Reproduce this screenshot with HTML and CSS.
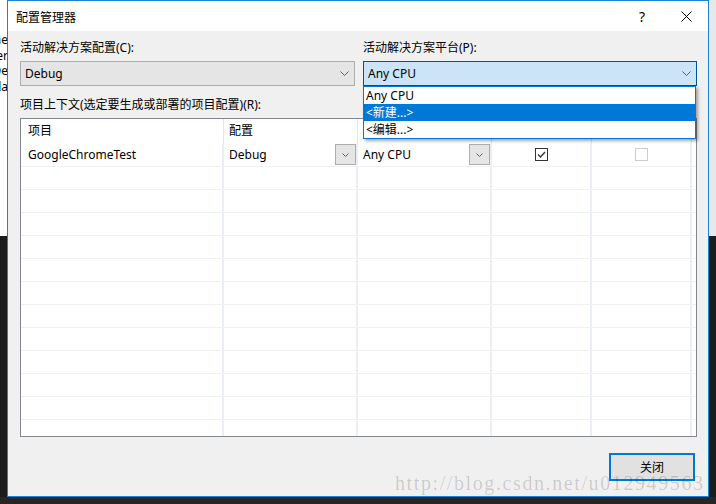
FILE: index.html
```html
<!DOCTYPE html>
<html>
<head>
<meta charset="utf-8">
<link rel="stylesheet" href="styles.css">
</head>
<body>
<div class="screen">
  <div class="main">
    <div class="side side-left">
      <div class="bgtext">
        <div class="bgline">ne</div>
        <div class="bgline">er</div>
        <div class="bgline">De</div>
        <div class="bgline">la</div>
      </div>
    </div>
    <div class="window">
      <div class="titlebar">
        <span class="title">配置管理器</span>
        <span class="tb-btn help">?</span>
        <span class="tb-btn close">
          <svg width="11" height="11" viewBox="0 0 11 11"><path d="M0.5 0.5 L10.5 10.5 M10.5 0.5 L0.5 10.5" stroke="#000" stroke-width="1" fill="none"/></svg>
        </span>
      </div>
      <div class="content">
        <div class="top-grid">
          <div class="field">
            <div class="label">活动解决方案配置(C):</div>
            <div class="combo">
              <span>Debug</span>
              <svg width="9" height="5" viewBox="0 0 9 5"><path d="M0.5 0.5 L4.5 4.5 L8.5 0.5" stroke="#606060" fill="none"/></svg>
            </div>
          </div>
          <div class="field">
            <div class="label">活动解决方案平台(P):</div>
            <div class="combo combo-open">
              <span>Any CPU</span>
              <svg width="9" height="5" viewBox="0 0 9 5"><path d="M0.5 0.5 L4.5 4.5 L8.5 0.5" stroke="#606060" fill="none"/></svg>
            </div>
            <div class="dropdown">
              <div class="dd-item">Any CPU</div>
              <div class="dd-item sel">&lt;新建...&gt;</div>
              <div class="dd-item">&lt;编辑...&gt;</div>
            </div>
          </div>
        </div>
        <div class="label label-ctx">项目上下文(选定要生成或部署的项目配置)(R):</div>
        <div class="table">
          <div class="trow thead">
            <div class="th th-first">项目</div>
            <div class="th">配置</div>
            <div class="th"></div>
            <div class="th"></div>
            <div class="th"></div>
            <div class="th th-last"></div>
          </div>
          <div class="trow row-first">
            <div class="td td-first">GoogleChromeTest</div>
            <div class="td cell-combo">
              <span>Debug</span>
              <span class="mini-btn"><svg width="7" height="4" viewBox="0 0 7 4"><path d="M0.5 0.5 L3.5 3.5 L6.5 0.5" stroke="#606060" fill="none"/></svg></span>
            </div>
            <div class="td cell-combo">
              <span>Any CPU</span>
              <span class="mini-btn"><svg width="7" height="4" viewBox="0 0 7 4"><path d="M0.5 0.5 L3.5 3.5 L6.5 0.5" stroke="#606060" fill="none"/></svg></span>
            </div>
            <div class="td cell-center">
              <span class="chk"><svg width="11" height="11" viewBox="0 0 11 11"><path d="M2 5.5 L4.5 8 L9 3" stroke="#333" stroke-width="1.3" fill="none"/></svg></span>
            </div>
            <div class="td cell-center"><span class="chk chk-off"></span></div>
            <div class="td td-last"></div>
          </div>
          <div class="trow"><div class="td"></div><div class="td"></div><div class="td"></div><div class="td"></div><div class="td"></div><div class="td td-last"></div></div>
          <div class="trow"><div class="td"></div><div class="td"></div><div class="td"></div><div class="td"></div><div class="td"></div><div class="td td-last"></div></div>
          <div class="trow"><div class="td"></div><div class="td"></div><div class="td"></div><div class="td"></div><div class="td"></div><div class="td td-last"></div></div>
          <div class="trow"><div class="td"></div><div class="td"></div><div class="td"></div><div class="td"></div><div class="td"></div><div class="td td-last"></div></div>
          <div class="trow"><div class="td"></div><div class="td"></div><div class="td"></div><div class="td"></div><div class="td"></div><div class="td td-last"></div></div>
          <div class="trow"><div class="td"></div><div class="td"></div><div class="td"></div><div class="td"></div><div class="td"></div><div class="td td-last"></div></div>
          <div class="trow"><div class="td"></div><div class="td"></div><div class="td"></div><div class="td"></div><div class="td"></div><div class="td td-last"></div></div>
          <div class="trow"><div class="td"></div><div class="td"></div><div class="td"></div><div class="td"></div><div class="td"></div><div class="td td-last"></div></div>
          <div class="trow"><div class="td"></div><div class="td"></div><div class="td"></div><div class="td"></div><div class="td"></div><div class="td td-last"></div></div>
          <div class="trow"><div class="td"></div><div class="td"></div><div class="td"></div><div class="td"></div><div class="td"></div><div class="td td-last"></div></div>
          <div class="trow"><div class="td"></div><div class="td"></div><div class="td"></div><div class="td"></div><div class="td"></div><div class="td td-last"></div></div>
          <div class="trow trow-end"><div class="td"></div><div class="td"></div><div class="td"></div><div class="td"></div><div class="td"></div><div class="td td-last"></div></div>
        </div>
        <div class="footer">
          <button class="btn-close">关闭</button>
        </div>
      </div>
    </div>
    <div class="side side-right"></div>
  </div>
  <div class="bottom"></div>
  <div class="watermark">http://blog.csdn.net/u012949563</div>
</div>
</body>
</html>
```
FILE: styles.css
```css
html, body {
  margin: 0;
  padding: 0;
}
body {
  width: 716px;
  height: 504px;
  overflow: hidden;
  background: #1c1c1c;
  font-family: "Noto Sans", "Noto Sans CJK SC", sans-serif;
  font-size: 12px;
  color: #000;
}
.screen {
  position: relative;
  width: 716px;
  height: 504px;
}
.main {
  display: flex;
  height: 497px;
}
.side {
  width: 7px;
  flex: none;
  overflow: hidden;
}
.side-left {
  background: linear-gradient(#ffffff 0, #ffffff 236px, #1c1c1c 236px);
}
.side-right {
  background: linear-gradient(#e8e8e8 0, #e8e8e8 236px, #1c1c1c 236px);
}
.bgtext {
  padding-top: 32px;
  font-size: 12px;
  line-height: 15.5px;
}
.bgline {
  display: flex;
  justify-content: flex-end;
  white-space: nowrap;
  width: 8px;
}
.bottom {
  height: 7px;
  background: #262627;
}
.window {
  width: 702px;
  height: 497px;
  flex: none;
  box-sizing: border-box;
  border: 1px solid #1883d7;
  background: #f0f0f0;
  display: flex;
  flex-direction: column;
}
.titlebar {
  height: 30px;
  flex: none;
  background: #ffffff;
  display: flex;
  align-items: center;
}
.title {
  flex: 1;
  padding-left: 8px;
  font-family: "Noto Sans CJK SC", sans-serif;
  font-size: 12px;
}
.tb-btn {
  height: 30px;
  display: flex;
  align-items: center;
  justify-content: center;
}
.help {
  width: 46px;
  font-size: 14px;
  font-family: "Noto Sans", sans-serif;
}
.close {
  width: 43px;
}
.content {
  flex: 1;
  padding: 9px 11px 0 12px;
  display: flex;
  flex-direction: column;
}
.top-grid {
  display: grid;
  grid-template-columns: 335px 334px;
  column-gap: 8px;
}
.field {
  position: relative;
}
.label {
  height: 16px;
  line-height: 16px;
  white-space: nowrap;
}
.combo {
  margin-top: 5px;
  height: 25px;
  box-sizing: border-box;
  border: 1px solid #adadad;
  background: #e5e5e5;
  display: flex;
  align-items: center;
  justify-content: space-between;
  padding: 0 5px 0 4px;
}
.combo-open {
  background: #cce4f7;
  border-color: #005499;
}
.dropdown {
  position: absolute;
  left: 0;
  top: 46px;
  width: 333px;
  box-sizing: border-box;
  border: 1px solid #0078d7;
  background: #ffffff;
  box-shadow: 2px 2px 3px rgba(0, 0, 0, 0.35);
  z-index: 5;
}
.dd-item {
  height: 17px;
  line-height: 17px;
  padding-left: 2px;
  white-space: nowrap;
}
.dd-item.sel {
  background: #0078d7;
  color: #ffffff;
}
.label-ctx {
  margin-top: 11px;
}
.table {
  margin-top: 5px;
  height: 319px;
  box-sizing: border-box;
  border: 1px solid #828790;
  background: #ffffff;
  overflow: hidden;
}
.trow {
  display: grid;
  grid-template-columns: 203px 134px 134px 100px 100px 1fr;
  height: 23px;
  box-sizing: border-box;
  border-bottom: 1px solid #f0f0f0;
}
.thead {
  height: 24px;
  border-bottom: none;
}
.row-first {
  height: 24px;
}
.trow-end {
  border-bottom: none;
}
.th {
  line-height: 24px;
  padding-left: 5px;
  border-right: 1px solid #e5e5e5;
  white-space: nowrap;
}
.th-first {
  padding-left: 7px;
}
.th-last {
  border-right: none;
}
.td {
  border-right: 2px solid #eaeff7;
  min-width: 0;
}
.td-last {
  border-right: none;
}
.td-first {
  display: flex;
  align-items: center;
  padding-left: 7px;
  white-space: nowrap;
}
.cell-combo {
  display: flex;
  align-items: center;
  justify-content: space-between;
  padding-left: 5px;
}
.mini-btn {
  width: 21px;
  height: 21px;
  box-sizing: border-box;
  border: 1px solid #adadad;
  background: #e5e5e5;
  display: flex;
  align-items: center;
  justify-content: center;
}
.cell-center {
  display: flex;
  align-items: center;
  justify-content: center;
}
.chk {
  width: 13px;
  height: 13px;
  box-sizing: border-box;
  border: 1px solid #333333;
  background: #ffffff;
  display: flex;
}
.chk-off {
  border-color: #cccccc;
}
.footer {
  display: flex;
  justify-content: flex-end;
  padding-top: 16px;
  padding-right: 2px;
}
.btn-close {
  width: 86px;
  height: 28px;
  box-sizing: border-box;
  border: 2px solid #0078d7;
  background: #e1e1e1;
  font-family: "Noto Sans CJK SC", sans-serif;
  font-size: 12px;
  line-height: 16px;
  color: #000;
  padding: 0;
  margin: 0;
}
.watermark {
  position: absolute;
  left: 395px;
  top: 476px;
  font-family: "Liberation Serif", serif;
  font-size: 20px;
  line-height: 15px;
  letter-spacing: 1.6px;
  color: rgba(0, 0, 0, 0.16);
  white-space: nowrap;
  pointer-events: none;
  z-index: 10;
}
```
